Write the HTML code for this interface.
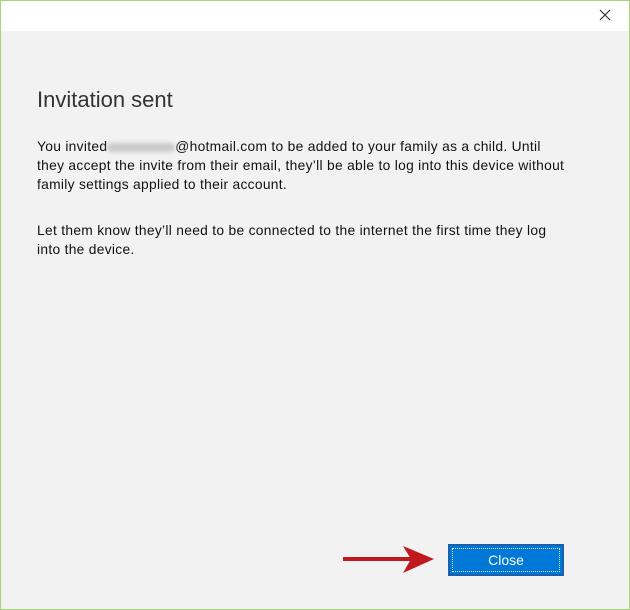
<!DOCTYPE html>
<html><head><style>
body{margin:0;width:630px;height:610px;overflow:hidden;font-family:"Liberation Sans",sans-serif;}
.win{position:absolute;left:0;top:0;width:628px;height:608px;border:1px solid #a6d479;background:#f2f2f2;}
.tb{position:absolute;left:0;top:0;width:628px;height:30px;background:#fff;}
.x{position:absolute;left:598px;top:8px;}
h1{position:absolute;left:36px;top:86px;margin:0;font-weight:normal;font-size:22px;color:#333;}
p{position:absolute;left:36px;margin:0;font-size:13.8px;letter-spacing:0.3px;line-height:19px;color:#111;white-space:nowrap;}
.blur{display:inline-block;width:68px;height:9px;background:#c8c8c8;border-radius:5px;filter:blur(2px);vertical-align:middle;}
.btn{position:absolute;left:447px;top:543px;width:112px;height:28px;background:#0078d7;border:2px solid #1a5fa8;color:#fff;font-size:14px;text-align:center;line-height:28px;}
.btn:after{content:"";position:absolute;left:2px;top:2px;right:2px;bottom:2px;border:1px dotted #cfe4f8;}
</style></head><body>
<div class="win">
<div class="tb"><svg class="x" width="12" height="12"><path d="M1 1L11 11M11 1L1 11" stroke="#333" stroke-width="1.2"/></svg></div>
<h1>Invitation sent</h1>
<p style="top:136px">You invited<span class="blur"></span>@hotmail.com to be added to your family as a child. Until<br>they accept the invite from their email, they’ll be able to log into this device without<br>family settings applied to their account.</p>
<p style="top:220px">Let them know they’ll need to be connected to the internet the first time they log<br>into the device.</p>
<svg style="position:absolute;left:340px;top:543px" width="95" height="32"><path d="M2 15H70" stroke="#c0181c" stroke-width="4"/><path d="M62 2L93 15L62 29L70 15Z" fill="#c0181c"/></svg>
<div class="btn">Close</div>
</div>
</body></html>
